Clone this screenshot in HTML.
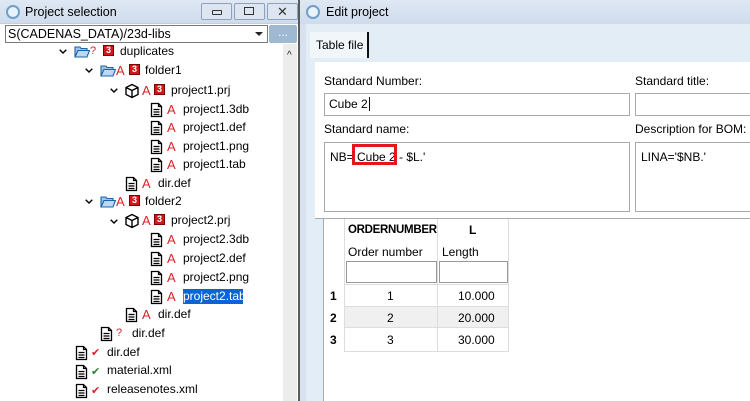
<!DOCTYPE html>
<html><head><meta charset="utf-8"><style>
*{box-sizing:border-box;margin:0;padding:0}
body{width:750px;height:401px;overflow:hidden;background:#fff;font-family:"Liberation Sans",sans-serif;font-size:12px;color:#000;position:relative}
.a{position:absolute;white-space:nowrap}
.tb{background:linear-gradient(#dfe8f3,#cfdcec);}
.t{position:absolute;font-size:12px;line-height:14px;white-space:nowrap}
.ra{color:#e0202a;font-size:13px;position:absolute;line-height:14px}
.b3{position:absolute;width:11px;height:11px;background:#d8141c;border:1px solid #7a0000;color:#fff;font-size:9px;line-height:9px;text-align:center;font-weight:bold}
.inp{position:absolute;background:#fff;border:1px solid #a9a9a9}
svg{position:absolute}
</style></head><body>
<svg width="0" height="0" style="position:absolute">
<defs>
<symbol id="doc" viewBox="0 0 13 16"><path d="M1.5 1.5h7l3 3v10h-10z" fill="#fff" stroke="#000" stroke-width="1.3"/><path d="M8.5 1.5v3h3M3.5 7.5h6M3.5 10h6M3.5 12.5h6" fill="none" stroke="#000" stroke-width="1.2"/></symbol>
<symbol id="fold" viewBox="0 0 16 13"><path d="M1 2h5l1 1.5h6v2H4L1 12z" fill="#9cc4e8" stroke="#1d63a8" stroke-width="1.1"/><path d="M4 5.5h11.5L13 12H1z" fill="#bcd8f2" stroke="#1d63a8" stroke-width="1.1"/></symbol>
<symbol id="cube" viewBox="0 0 16 16"><path d="M8 1.5l6 3v7l-6 3-6-3v-7z M2 4.5l6 3 6-3 M8 7.5v7" fill="none" stroke="#000" stroke-width="1.4"/></symbol>
<symbol id="chev" viewBox="0 0 8 5"><path d="M0.7 0.7L4 4 7.3 0.7" fill="none" stroke="#000" stroke-width="1.4"/></symbol>
</defs></svg>

<!-- LEFT PANEL -->
<div class="a tb" style="left:0;top:0;width:298px;height:24px;border-bottom:1px solid #c3cfdd"></div>
<div class="a" style="left:6px;top:5px;width:14px;height:14px;border-radius:50%;background:#eaf3fb;border:2px solid #6ea0cc"></div>
<div class="t" style="left:25px;top:5px;font-size:12.5px">Project selection</div>
<div class="a" style="left:201px;top:3px;width:31px;height:17px;border:1px solid #8ea3bb;border-radius:2px;background:#dde6f0"></div>
<div class="a" style="left:212px;top:10px;width:10px;height:5px;border:1.5px solid #333;border-radius:1px"></div>
<div class="a" style="left:234px;top:3px;width:31px;height:17px;border:1px solid #8ea3bb;border-radius:2px;background:#dde6f0"></div>
<div class="a" style="left:244px;top:7px;width:10px;height:8px;border:1.5px solid #333"></div>
<div class="a" style="left:267px;top:3px;width:31px;height:17px;border:1px solid #8ea3bb;border-radius:2px;background:#dde6f0;text-align:center;font-size:13px;line-height:15px;color:#333">✕</div>
<div class="inp" style="left:5px;top:25px;width:263px;height:18px;border-color:#7a7a7a"></div>
<div class="t" style="left:8px;top:27px;font-size:12.5px">S(CADENAS_DATA)/23d-libs</div>
<div class="a" style="left:255px;top:32px;width:0;height:0;border-left:4px solid transparent;border-right:4px solid transparent;border-top:4px solid #222"></div>
<div class="a" style="left:269px;top:25px;width:28px;height:18px;background:#9fb9d3;border-radius:2px;color:#fff;text-align:center;line-height:14px">...</div>
<div class="a" style="left:283px;top:44px;width:14px;height:357px;background:#ececec"></div>
<div class="a" style="left:287px;top:50px;font-size:10px;color:#222">^</div>
<div class="a" style="left:298px;top:0;width:2px;height:401px;background:#5a5a5a"></div>

<!-- tree -->
<svg style="left:59px;top:49px" width="8" height="5"><use href="#chev"/></svg>
<svg style="left:74px;top:45px" width="16" height="13"><use href="#fold"/></svg>
<div class="ra" style="left:90px;top:44px;font-size:11px">?</div>
<div class="b3" style="left:103px;top:45px">3</div>
<div class="t" style="left:120px;top:44px">duplicates</div>

<svg style="left:85px;top:68px" width="8" height="5"><use href="#chev"/></svg>
<svg style="left:100px;top:64px" width="16" height="13"><use href="#fold"/></svg>
<div class="ra" style="left:116px;top:64px">A</div>
<div class="b3" style="left:129px;top:64px">3</div>
<div class="t" style="left:145px;top:63px">folder1</div>

<svg style="left:110px;top:88px" width="8" height="5"><use href="#chev"/></svg>
<svg style="left:124px;top:83px" width="16" height="16"><use href="#cube"/></svg>
<div class="ra" style="left:142px;top:84px">A</div>
<div class="b3" style="left:154px;top:84px">3</div>
<div class="t" style="left:171px;top:83px">project1.prj</div>

<svg style="left:150px;top:102px" width="13" height="16"><use href="#doc"/></svg><div class="ra" style="left:167px;top:103px">A</div><div class="t" style="left:183px;top:102px">project1.3db</div>
<svg style="left:150px;top:120px" width="13" height="16"><use href="#doc"/></svg><div class="ra" style="left:167px;top:121px">A</div><div class="t" style="left:183px;top:120px">project1.def</div>
<svg style="left:150px;top:139px" width="13" height="16"><use href="#doc"/></svg><div class="ra" style="left:167px;top:140px">A</div><div class="t" style="left:183px;top:139px">project1.png</div>
<svg style="left:150px;top:157px" width="13" height="16"><use href="#doc"/></svg><div class="ra" style="left:167px;top:158px">A</div><div class="t" style="left:183px;top:157px">project1.tab</div>
<svg style="left:125px;top:176px" width="13" height="16"><use href="#doc"/></svg><div class="ra" style="left:142px;top:177px">A</div><div class="t" style="left:158px;top:176px">dir.def</div>

<svg style="left:85px;top:199px" width="8" height="5"><use href="#chev"/></svg>
<svg style="left:100px;top:195px" width="16" height="13"><use href="#fold"/></svg>
<div class="ra" style="left:116px;top:195px">A</div>
<div class="b3" style="left:129px;top:195px">3</div>
<div class="t" style="left:145px;top:194px">folder2</div>

<svg style="left:110px;top:219px" width="8" height="5"><use href="#chev"/></svg>
<svg style="left:124px;top:213px" width="16" height="16"><use href="#cube"/></svg>
<div class="ra" style="left:142px;top:214px">A</div>
<div class="b3" style="left:154px;top:214px">3</div>
<div class="t" style="left:171px;top:213px">project2.prj</div>

<svg style="left:150px;top:232px" width="13" height="16"><use href="#doc"/></svg><div class="ra" style="left:167px;top:233px">A</div><div class="t" style="left:183px;top:232px">project2.3db</div>
<svg style="left:150px;top:251px" width="13" height="16"><use href="#doc"/></svg><div class="ra" style="left:167px;top:252px">A</div><div class="t" style="left:183px;top:251px">project2.def</div>
<svg style="left:150px;top:270px" width="13" height="16"><use href="#doc"/></svg><div class="ra" style="left:167px;top:271px">A</div><div class="t" style="left:183px;top:270px">project2.png</div>
<svg style="left:150px;top:289px" width="13" height="16"><use href="#doc"/></svg><div class="ra" style="left:167px;top:290px">A</div><div class="t" style="left:183px;top:289px;background:#0a64d6;color:#fff;width:60px;height:15px;overflow:hidden">project2.tab</div>
<svg style="left:125px;top:307px" width="13" height="16"><use href="#doc"/></svg><div class="ra" style="left:142px;top:308px">A</div><div class="t" style="left:158px;top:307px">dir.def</div>
<svg style="left:100px;top:326px" width="13" height="16"><use href="#doc"/></svg><div class="ra" style="left:116px;top:326px;font-size:11px">?</div><div class="t" style="left:132px;top:326px">dir.def</div>
<svg style="left:75px;top:345px" width="13" height="16"><use href="#doc"/></svg><div class="ra" style="left:91px;top:346px;font-size:11px">✔</div><div class="t" style="left:107px;top:345px">dir.def</div>
<svg style="left:75px;top:364px" width="13" height="16"><use href="#doc"/></svg><div class="ra" style="left:91px;top:365px;font-size:11px;color:#2e7d32">✔</div><div class="t" style="left:107px;top:363px">material.xml</div>
<svg style="left:75px;top:383px" width="13" height="16"><use href="#doc"/></svg><div class="ra" style="left:91px;top:384px;font-size:11px">✔</div><div class="t" style="left:107px;top:382px">releasenotes.xml</div>

<!-- RIGHT PANEL -->
<div class="a tb" style="left:300px;top:0;width:450px;height:24px"></div>
<div class="a" style="left:306px;top:5px;width:14px;height:14px;border-radius:50%;background:#eaf3fb;border:2px solid #6ea0cc"></div>
<div class="t" style="left:326px;top:5px;font-size:12.5px">Edit project</div>
<div class="a" style="left:300px;top:24px;width:450px;height:377px;background:#e3edf6;border-left:6px solid #d7e2ee"></div>
<div class="a" style="left:310px;top:32px;width:59px;height:26px;background:#f1f6fb;border-right:2px solid #111"></div>
<div class="t" style="left:316px;top:38px">Table file</div>
<div class="a" style="left:315px;top:62px;width:435px;height:156px;background:#fff"></div>
<div class="a" style="left:324px;top:219px;width:426px;height:182px;background:#fff"></div>
<div class="t" style="left:324px;top:74px">Standard Number:</div>
<div class="t" style="left:635px;top:74px">Standard title:</div>
<div class="inp" style="left:324px;top:93px;width:306px;height:23px"></div>
<div class="t" style="left:329px;top:97px">Cube 2<span style="border-left:1px solid #000;margin-left:1px"></span></div>
<div class="inp" style="left:635px;top:93px;width:120px;height:23px"></div>
<div class="t" style="left:324px;top:122px">Standard name:</div>
<div class="t" style="left:635px;top:122px">Description for BOM:</div>
<div class="inp" style="left:324px;top:142px;width:306px;height:70px"></div>
<div class="inp" style="left:635px;top:142px;width:120px;height:70px"></div>
<div class="t" style="left:330px;top:150px">NB=</div>
<div class="t" style="left:357px;top:150px">Cube 2</div>
<div class="t" style="left:399px;top:150px">- $L.'</div>
<div class="a" style="left:352px;top:144px;width:45px;height:21px;border:3px solid #e4161c"></div>
<div class="t" style="left:641px;top:150px">LINA='$NB.'</div>
<div class="a" style="left:315px;top:218px;width:435px;height:1px;background:#a9a9a9"></div>
<div class="a" style="left:323px;top:218px;width:1px;height:183px;background:#a9a9a9"></div>
<!-- table -->
<div class="a" style="left:344px;top:219px;width:165px;height:133px;border-right:1px solid #ddd;border-bottom:1px solid #ddd"></div>
<div class="a" style="left:437px;top:219px;width:1px;height:133px;background:#ddd"></div>
<div class="a" style="left:344px;top:219px;width:1px;height:133px;background:#ddd"></div>
<div class="t" style="left:348px;top:223px;font-weight:bold;font-size:11.5px;letter-spacing:-0.3px">ORDERNUMBER</div>
<div class="t" style="left:469px;top:223px;font-weight:bold">L</div>
<div class="t" style="left:348px;top:245px">Order number</div>
<div class="t" style="left:442px;top:245px">Length</div>
<div class="inp" style="left:346px;top:261px;width:91px;height:22px;border-color:#999"></div>
<div class="inp" style="left:439px;top:261px;width:69px;height:22px;border-color:#999"></div>
<div class="a" style="left:344px;top:284px;width:165px;height:1px;background:#ddd"></div>
<div class="a" style="left:345px;top:306px;width:163px;height:22px;background:#f0f0f0;border-top:1px solid #ddd;border-bottom:1px solid #ddd"></div>
<div class="a" style="left:437px;top:306px;width:1px;height:22px;background:#ddd"></div>
<div class="t" style="left:330px;top:289px;font-weight:bold">1</div><div class="t" style="left:387px;top:289px">1</div><div class="t" style="left:458px;top:289px">10.000</div>
<div class="t" style="left:330px;top:311px;font-weight:bold">2</div><div class="t" style="left:387px;top:311px">2</div><div class="t" style="left:458px;top:311px">20.000</div>
<div class="t" style="left:330px;top:333px;font-weight:bold">3</div><div class="t" style="left:387px;top:333px">3</div><div class="t" style="left:458px;top:333px">30.000</div>
</body></html>
